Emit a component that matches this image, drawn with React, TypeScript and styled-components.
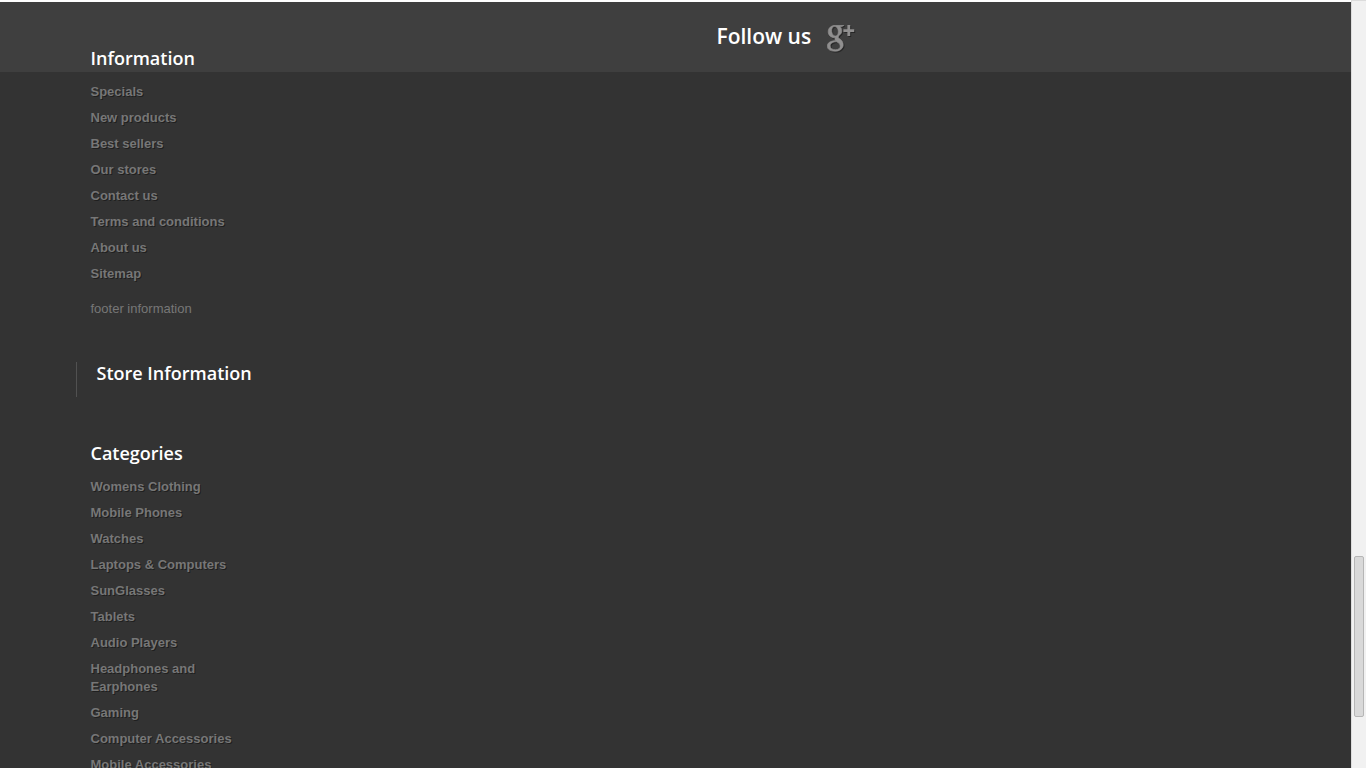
import React from 'react';
import styled, { createGlobalStyle } from 'styled-components';

const GlobalStyle = createGlobalStyle`
  * {
    box-sizing: border-box;
  }
  body {
    margin: 0;
    background: #fff;
    font: 13px/18px "Liberation Sans", Arial, sans-serif;
    color: #777;
  }
`;

const Viewport = styled.div`
  display: flex;
  height: 100vh;
  overflow: hidden;
`;

const Page = styled.div`
  flex: 1;
  min-width: 0;
  padding-top: 2px;
`;

const Footer = styled.footer`
  min-height: 100%;
  background: #333 linear-gradient(#3f3f3f, #3f3f3f) no-repeat 0 0 / 100% 70px;
`;

const Container = styled.div`
  display: grid;
  grid-template-columns: 1fr 1fr;
  max-width: 1200px;
  margin: 0 auto;
`;

const Columns = styled.div`
  width: 180px;
  padding-top: 45px;
`;

const Block = styled.section`
  padding: 0 15px;
  margin-bottom: 44px;
`;

const StoreBlock = styled.section`
  height: 35px;
  margin-bottom: 45px;
  padding-left: 20px;
  border-left: 1px solid #515151;
`;

const Title = styled.h4`
  margin: 0;
  padding-bottom: 14px;
  font: 600 18px/22px "Open Sans", sans-serif;
  color: #fff;
  white-space: nowrap;
`;

const LinkList = styled.ul`
  margin: 0;
  padding: 0;
  list-style: none;
`;

const Item = styled.li`
  padding-bottom: 8px;
`;

const FooterLink = styled.a`
  color: #777;
  font-weight: bold;
  text-decoration: none;
  text-shadow: 1px 1px 0 rgba(0, 0, 0, 0.4);
`;

const Note = styled.p`
  margin: 9px 0 0;
`;

const Social = styled.section`
  display: flex;
  align-items: flex-start;
  gap: 16px;
  padding: 22px 0 0 41px;
`;

const SocialTitle = styled.h4`
  margin: 0;
  font: 600 21px/25px "Open Sans", sans-serif;
  color: #fff;
`;

const SocialLink = styled.a`
  display: block;
  padding-top: 1px;
  color: #908f8f;
  filter: drop-shadow(1px 1px 0 rgba(0, 0, 0, 0.4));

  svg {
    display: block;
  }
`;

const ScrollTrack = styled.div`
  flex: none;
  width: 15px;
  padding: 555px 2px 0;
  background: #f1f1f1;
  border-left: 1px solid #dcdcdc;
  border-top: 1px solid #dcdcdc;
`;

const ScrollThumb = styled.div`
  height: 161px;
  background: #d9d9d9;
  border: 1px solid #b6b6b6;
  border-radius: 2px;
`;

const information = [
  'Specials',
  'New products',
  'Best sellers',
  'Our stores',
  'Contact us',
  'Terms and conditions',
  'About us',
  'Sitemap',
];

const categories = [
  'Womens Clothing',
  'Mobile Phones',
  'Watches',
  'Laptops & Computers',
  'SunGlasses',
  'Tablets',
  'Audio Players',
  'Headphones and Earphones',
  'Gaming',
  'Computer Accessories',
  'Mobile Accessories',
];

function Links({ items }: { items: string[] }) {
  return (
    <LinkList>
      {items.map((item) => (
        <Item key={item}>
          <FooterLink href="#">{item}</FooterLink>
        </Item>
      ))}
    </LinkList>
  );
}

function GooglePlusIcon() {
  return (
    <svg
      width="28"
      height="28"
      viewBox="0 0 28 28"
      fill="currentColor"
      aria-hidden="true"
    >
      <path
        stroke="currentColor"
        strokeWidth="0.6"
        fillRule="evenodd"
        d="M17 .3H8.500C4.300.300 1.200 3 1.200 6.700c0 3.400 2.600 6 6.200 6h.8c-.5 1-.3 2 .5 2.900C3.800 15.800.300 17.700.300 21.100c0 3.300 3 5.200 7.400 5.200 5.200 0 8.500-2.900 8.500-6.400 0-2.600-1-4.200-3.200-5.800-1.300-1-1.700-1.500-1.700-2.200 0-.6.500-1.100 1.300-1.800 1.500-1.200 2.200-2.500 2.200-4.400 0-1.700-.6-3.100-1.800-4.200h2ZM7.600 1.500c2 0 3.500 2.100 3.700 4.700.2 2.700-1 4.800-2.900 4.800S4.900 8.900 4.700 6.200c-.2-2.700 1-4.700 2.900-4.700ZM9.700 16.800c2.300 1.500 3.500 2.500 3.500 4.400 0 2.200-1.800 3.500-4.800 3.500-3.100 0-5.200-1.400-5.200-3.800 0-2.500 2.700-4.200 6.500-4.100Z"
      />
      <path d="M20.400 0h2.800v4.200H27.200v2.700h-4V11h-2.800V6.900h-4V4.200h4Z" />
    </svg>
  );
}

export default function App() {
  return (
    <Viewport>
      <GlobalStyle />
      <Page>
        <Footer>
          <Container>
            <Columns>
              <Block>
                <Title>Information</Title>
                <Links items={information} />
                <Note>footer information</Note>
              </Block>
              <StoreBlock>
                <Title>Store Information</Title>
              </StoreBlock>
              <Block>
                <Title>Categories</Title>
                <Links items={categories} />
              </Block>
            </Columns>
            <Social>
              <SocialTitle>Follow us</SocialTitle>
              <SocialLink href="#" aria-label="Google Plus">
                <GooglePlusIcon />
              </SocialLink>
            </Social>
          </Container>
        </Footer>
      </Page>
      <ScrollTrack aria-hidden="true">
        <ScrollThumb />
      </ScrollTrack>
    </Viewport>
  );
}
